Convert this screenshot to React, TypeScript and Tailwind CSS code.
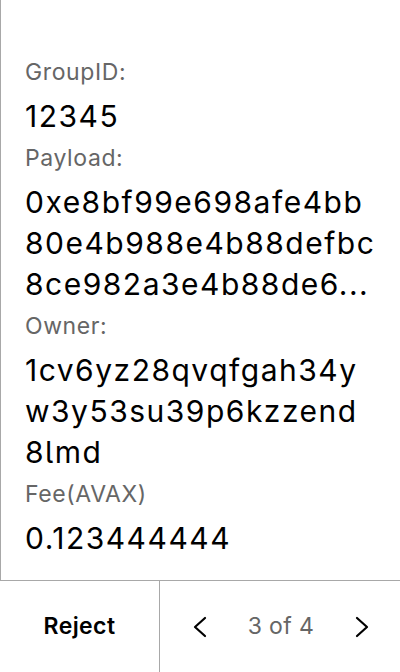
const fields: { label: string; lines: string[] }[] = [
  { label: "GroupID:", lines: ["12345"] },
  { label: "Payload:", lines: ["0xe8bf99e698afe4bb", "80e4b988e4b88defbc", "8ce982a3e4b88de6..."] },
  { label: "Owner:", lines: ["1cv6yz28qvqfgah34y", "w3y53su39p6kzzend", "8lmd"] },
  { label: "Fee(AVAX)", lines: ["0.123444444"] },
];

function Chevron({ dir }: { dir: "left" | "right" }) {
  return (
    <svg width="16" height="22" viewBox="0 0 16 22" fill="none" stroke="#000" strokeWidth="2.2" strokeLinecap="round" strokeLinejoin="round">
      {dir === "left" ? <path d="M13 2 L3 11 L13 20" /> : <path d="M3 2 L13 11 L3 20" />}
    </svg>
  );
}

export default function App() {
  return (
    <div className="h-[672px] w-[400px] flex flex-col bg-white font-['Inter',sans-serif] text-black">
      <div className="flex-1 border-l border-[#a8a8a8] pt-[56px] pl-[24px] pr-[12px] flex flex-col gap-[5px]">
        {fields.map((f) => (
          <div key={f.label}>
            <div className="text-[23px] leading-[32px] tracking-[0.6px] text-[#666]">{f.label}</div>
            <div className="mt-2 text-[30px] leading-[41px] tracking-[1.5px] whitespace-nowrap [font-feature-settings:'cv05']">
              {f.lines.map((l) => (
                <div key={l}>{l}</div>
              ))}
            </div>
          </div>
        ))}
      </div>
      <div className="h-[92px] border-t border-[#a8a8a8] grid grid-cols-[160px_1fr]">
        <div className="flex items-center justify-center border-r border-[#a8a8a8] text-[23px] font-semibold tracking-[0.4px]">
          Reject
        </div>
        <div className="flex items-center justify-between pl-[32px] pr-[30px]">
          <Chevron dir="left" />
          <span className="text-[23px] tracking-[0.4px] text-[#666]">3 of 4</span>
          <Chevron dir="right" />
        </div>
      </div>
    </div>
  );
}
